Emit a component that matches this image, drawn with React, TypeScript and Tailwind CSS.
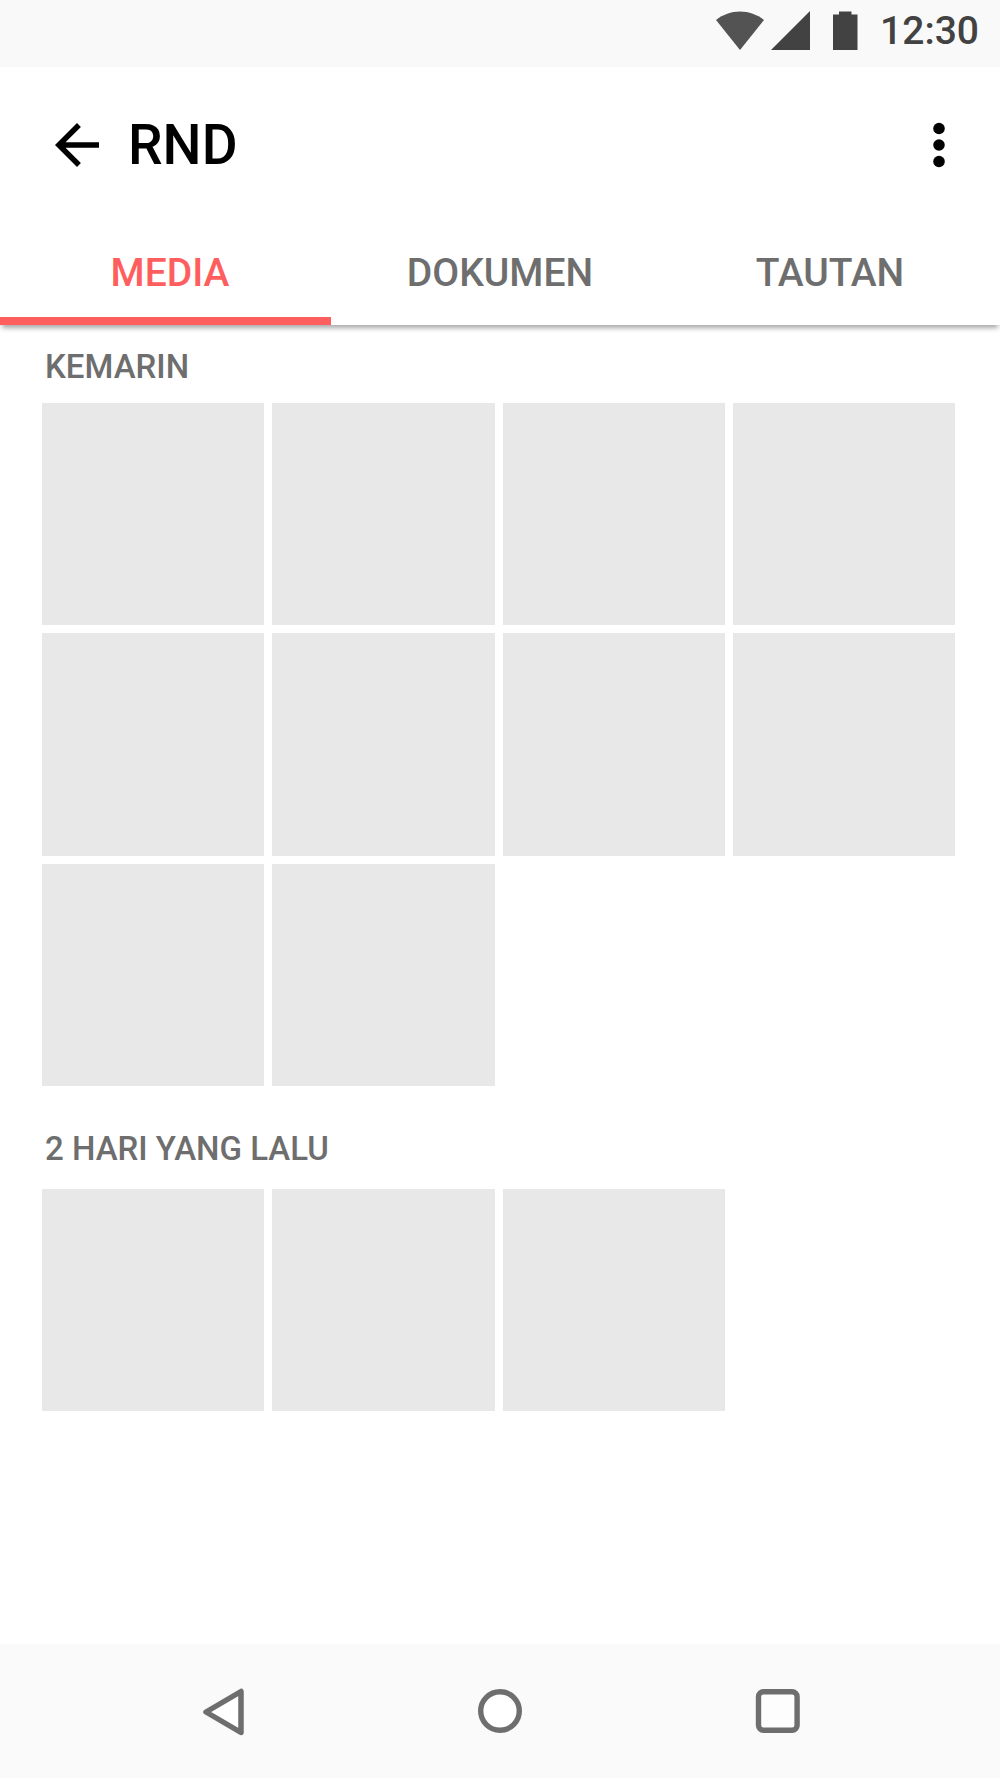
import React from "react";

const tabs = ["MEDIA", "DOKUMEN", "TAUTAN"];

function StatusBar() {
  return (
    <div className="flex h-[67px] items-center justify-end bg-[#f9f9f9] pr-[21px] pb-[5px] text-[#424242]">
      <svg aria-hidden="true" className="h-[40px] w-[50px]" viewBox="0 0 50 40">
        <path d="M25 39 1 9C8 3.500 16 0.500 25 0.500s17 3 24 8.500z" fill="#535353" />
      </svg>
      <svg aria-hidden="true" className="ml-[6px] h-[40px] w-[39px]" viewBox="0 0 39 40">
        <path d="M0 39H39V0z" fill="currentColor" />
      </svg>
      <svg aria-hidden="true" className="ml-[23px] h-[40px] w-[25px]" viewBox="0 0 25 40">
        <path d="M0 39V3.500H6V0.500H18.500V3.500H24.500V39z" fill="currentColor" />
      </svg>
      <span className="ml-[22px] text-[39px] leading-[46px] font-medium">12:30</span>
    </div>
  );
}

function AppBar() {
  return (
    <div className="flex h-[154px] items-center pt-px pr-[28px] pl-[44px] text-black">
      <button type="button" aria-label="Kembali" className="h-[66px] w-[66px]">
        <svg aria-hidden="true" className="h-full w-full" viewBox="0 0 24 24" fill="currentColor">
          <path d="M20 11H7.830l5.590-5.590L12 4l-8 8 8 8 1.410-1.410L7.830 13H20v-2z" />
        </svg>
      </button>
      <h1 className="ml-[18px] flex-1 text-[55px] leading-[66px] font-medium">RND</h1>
      <button type="button" aria-label="Opsi lainnya" className="h-[66px] w-[66px]">
        <svg aria-hidden="true" className="h-full w-full" viewBox="0 0 24 24" fill="currentColor">
          <circle cx="12" cy="6" r="2.100" />
          <circle cx="12" cy="12" r="2.100" />
          <circle cx="12" cy="18" r="2.100" />
        </svg>
      </button>
    </div>
  );
}

function Tabs() {
  return (
    <div role="tablist" className="relative flex h-[104px] px-[5px]">
      {tabs.map((label, i) => (
        <button
          key={label}
          type="button"
          role="tab"
          aria-selected={i === 0}
          className={`flex-1 text-[39px] leading-[46px] font-medium ${i === 0 ? "text-[#ff5e5e]" : "text-[#6e6e6e]"}`}
        >
          {label}
        </button>
      ))}
      <span className="absolute bottom-0 left-0 h-2 w-[33.1%] bg-[#ff5e5e]" />
    </div>
  );
}

function MediaGrid({ count }: { count: number }) {
  return (
    <ul className="grid grid-cols-4 gap-2">
      {Array.from({ length: count }, (_, i) => (
        <li key={i} className="aspect-square bg-[#e8e8e8]" />
      ))}
    </ul>
  );
}

function NavigationBar() {
  return (
    <nav className="flex h-[134px] items-center justify-between bg-[#fafafa] px-[200px] text-[#6e6e6e]">
      <button type="button" aria-label="Kembali" className="h-[50px] w-[48px]">
        <svg aria-hidden="true" className="h-full w-full" viewBox="0 0 48 50">
          <path d="M6 26 41 5.500V46.500z" fill="#fff" stroke="currentColor" strokeWidth="5.500" strokeLinejoin="round" />
        </svg>
      </button>
      <button type="button" aria-label="Beranda" className="h-[44px] w-[44px]">
        <svg aria-hidden="true" className="h-full w-full" viewBox="0 0 44 44">
          <circle cx="22" cy="22" r="19.300" fill="#fff" stroke="currentColor" strokeWidth="5.400" />
        </svg>
      </button>
      <button type="button" aria-label="Aplikasi terbaru" className="h-[44px] w-[48px]">
        <svg aria-hidden="true" className="h-full w-full" viewBox="0 0 48 44">
          <rect x="6.500" y="2.700" width="38.600" height="38.600" rx="5" fill="#fdfdfd" stroke="currentColor" strokeWidth="5.400" />
        </svg>
      </button>
    </nav>
  );
}

export default function App() {
  return (
    <div className="flex min-h-screen flex-col bg-white font-['Roboto',sans-serif]">
      <StatusBar />
      <header className="bg-white shadow-[0_5px_5px_-2px_rgba(0,0,0,0.35)]">
        <AppBar />
        <Tabs />
      </header>
      <main className="flex-1 pr-[45px] pl-[42px] text-[#6e6e6e]">
        <section className="pt-[22px]">
          <h2 className="mb-4 pl-[3px] text-[33px] leading-[40px] font-medium">KEMARIN</h2>
          <MediaGrid count={10} />
        </section>
        <section className="pt-[43px]">
          <h2 className="mb-[20px] pl-[3px] text-[33px] leading-[40px] font-medium">2 HARI YANG LALU</h2>
          <MediaGrid count={3} />
        </section>
      </main>
      <NavigationBar />
    </div>
  );
}
